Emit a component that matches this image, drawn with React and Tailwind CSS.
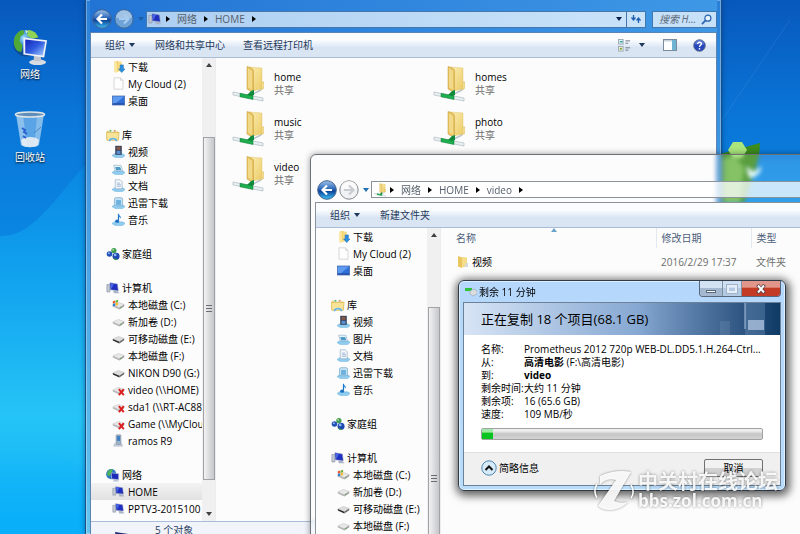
import React from "react";

/* ---------- icons ---------- */

function Glyph({ size = "size-[13px]", children }) {
  return (
    <svg viewBox="0 0 16 16" className={`${size} shrink-0`} aria-hidden="true">
      {children}
    </svg>
  );
}

const DownloadsIcon = () => (
  <Glyph>
    <path d="M3 2l5-1v13l-5 1z" fill="#f3cf62" />
    <path d="M3 2l3 1v13l-3-1z" fill="#fbe8a4" />
    <path d="M7 2h5v12H7z" fill="#f6dc85" />
    <path d="M10 6h4v5h2l-4 4.500-4-4.500h2z" fill="#2b8fe0" stroke="#1667b0" strokeWidth=".6" />
  </Glyph>
);

const BlankFileIcon = () => (
  <Glyph>
    <path d="M2.500 1h8l3 3v11h-11z" fill="#fefefe" stroke="#c9c9c9" strokeWidth=".9" />
    <path d="M10.500 1v3h3" fill="#eee" stroke="#c9c9c9" strokeWidth=".8" />
  </Glyph>
);

const DesktopIcon = () => (
  <Glyph>
    <rect x=".5" y="2.500" width="15" height="11" fill="#2f6fd8" stroke="#4a6cae" />
    <path d="M1 3h14L4 12H1z" fill="#5d9af0" />
    <path d="M1 11.500h14V13H1z" fill="#24489c" />
  </Glyph>
);

const LibraryIcon = () => (
  <Glyph size="size-[14px]">
    <path d="M1 3h4l1 1h8v9H1z" fill="#f0cc62" />
    <path d="M3 2h9v3H3z" fill="#e9f5ef" />
    <path d="M4 2.500h2v1.500H4z" fill="#3faa48" />
    <path d="M9 2.500h2v1.500H9z" fill="#e07b3b" />
    <path d="M0 5h15l-1 9H1z" fill="#f9e396" stroke="#d8b04a" strokeWidth=".8" />
    <path d="M3 15c0-5 10-5 10 0h-2c0-2.500-6-2.500-6 0z" fill="#67b7e8" />
  </Glyph>
);

const Tray = () => (
  <path d="M0 13c3-3 5-2.500 6-2h4c2-.5 4.500 0 6 2l-3 2.500H4z" fill="#8fcdf0" stroke="#4d9fd0" strokeWidth=".5" />
);

const VideoIcon = () => (
  <Glyph>
    <Tray />
    <path d="M4 1h8v11H4z" fill="#2c3b55" />
    <path d="M5.500 2h5v4h-5z" fill="#8a5a48" />
    <path d="M5.500 7h5v4h-5z" fill="#5c8fcf" />
  </Glyph>
);

const PictureIcon = () => (
  <Glyph>
    <Tray />
    <path d="M2 4h9l2 7H4z" fill="#e9f3fa" stroke="#86a9c4" strokeWidth=".7" />
    <path d="M4 6h6l1.500 4H5z" fill="#4d9bc7" />
  </Glyph>
);

const DocumentIcon = () => (
  <Glyph>
    <Tray />
    <path d="M4 1h6l2.500 2.500V12H4z" fill="#f4f8fc" stroke="#93a8be" strokeWidth=".8" />
    <path d="M6 5h4M6 7h5M6 9h5" stroke="#7a9cc4" strokeWidth=".8" />
  </Glyph>
);

const ThunderIcon = () => (
  <Glyph>
    <Tray />
    <rect x="3" y="2" width="10" height="10" rx="2" fill="#c3e0f3" stroke="#6fa4c8" strokeWidth=".8" />
    <rect x="5" y="5" width="6" height="6" fill="#6db2df" />
  </Glyph>
);

const MusicIcon = () => (
  <Glyph>
    <Tray />
    <path d="M8 1v8" stroke="#1d6fc0" strokeWidth="1.500" />
    <ellipse cx="6.300" cy="10" rx="2.500" ry="2" fill="#1d6fc0" />
    <path d="M8 1c1 3 4 3 3 6-.6-2-2-2-3-2.500z" fill="#2b8be0" />
  </Glyph>
);

const HomegroupIcon = () => (
  <Glyph size="size-[14px]">
    <circle cx="4" cy="8" r="3.200" fill="#2452b8" />
    <circle cx="9" cy="4" r="3" fill="#3f9c4e" />
    <circle cx="11.500" cy="10.500" r="4" fill="#1f47b0" />
    <circle cx="10.500" cy="9" r="1.600" fill="#8ab8f5" />
    <circle cx="8.200" cy="3.200" r="1" fill="#b9e6a8" />
    <circle cx="3.300" cy="7" r="1" fill="#9cc4f5" />
    <path d="M7.500 12.500l3 2.500 3-1z" fill="#3f9c4e" />
  </Glyph>
);

const ComputerIcon = ({ size = "size-[14px]" }) => (
  <Glyph size={size}>
    <path d="M1 4h3.500v8.500H1z" fill="#c2c8d4" stroke="#7b8496" strokeWidth=".6" />
    <path d="M4.500 2l8.500 1.500 1 7.500-9-1z" fill="#1f2fc0" stroke="#8b95b0" strokeWidth=".6" />
    <path d="M5 2.500l4 1-3 6z" fill="#4a66e8" />
    <path d="M8 11l5 .5 2.500 2.500H9z" fill="#aab4c6" />
  </Glyph>
);

const Drive = ({ dark }) => (
  <>
    <path d="M1 8.500l7-3 7 2.500-6 4z" fill={dark ? "#ddd" : "#e8e8e8"} stroke="#b0b0b0" strokeWidth=".5" />
    <path d="M1 8.500l8 3.500v2l-8-3.500z" fill={dark ? "#2b2b2b" : "#b4b4b4"} />
    <path d="M9 12l6-4v2l-6 4z" fill={dark ? "#666" : "#9a9a9a"} />
    {!dark && <circle cx="11" cy="11.500" r=".8" fill="#45b04a" />}
  </>
);

const DriveIcon = () => (
  <Glyph>
    <Drive />
  </Glyph>
);

const RemovableIcon = () => (
  <Glyph>
    <Drive dark />
  </Glyph>
);

const SystemDriveIcon = () => (
  <Glyph>
    <Drive />
    <path d="M1 4l3-1v3L1 7z" fill="#e8582a" />
    <path d="M4.500 3l3-1v3l-3 1z" fill="#6cb33f" />
    <path d="M1 7.500l3-1v3l-3 1z" fill="#2f7fd0" />
    <path d="M4.500 6.500l3-1v3l-3 1z" fill="#f5bd2c" />
  </Glyph>
);

const LostDriveIcon = () => (
  <Glyph>
    <Drive />
    <path d="M8.500 7.500l6 7.500M14.500 7.500l-6 7.500" stroke="#dc1f1f" strokeWidth="2.400" />
  </Glyph>
);

const PhoneIcon = () => (
  <Glyph>
    <path d="M3 12l9 0 1 3H2z" fill="#cfd6df" stroke="#96a2b2" strokeWidth=".5" />
    <rect x="5" y="1" width="6" height="12" rx="1" fill="#9fb3c8" stroke="#6f8399" strokeWidth=".6" />
    <rect x="6.200" y="2.500" width="3.600" height="6" fill="#3f7fc6" />
  </Glyph>
);

const NetworkIcon = () => (
  <Glyph size="size-[14px]">
    <circle cx="6" cy="7" r="5.800" fill="#2a76c8" />
    <path d="M2 4c2-3 5-3 6-2L6 6 4 9 1 8z" fill="#4fb556" />
    <path d="M6 5.500l8.500 1v7l-8-1z" fill="#1c2cb8" stroke="#b6c2da" strokeWidth=".8" />
    <path d="M9 13.500l5 .5 1 1.500H8z" fill="#b9c2d2" />
  </Glyph>
);

const SharedFolderIcon = ({ className = "h-9 w-8" }) => (
  <svg viewBox="0 0 32 36" className={`${className} shrink-0`} aria-hidden="true">
    <defs>
      <linearGradient id="leaf" x1="0" y1="0" x2="1" y2="1">
        <stop offset="0" stopColor="#fbeeb4" />
        <stop offset="1" stopColor="#eccb66" />
      </linearGradient>
    </defs>
    <path d="M29 16h3v6l-3 2z" fill="#f7e3a0" stroke="#d9b75a" strokeWidth=".6" />
    <path d="M17 1l13 1v21l-10 2z" fill="url(#leaf)" stroke="#dcbb5c" strokeWidth=".4" />
    <path d="M15 .5c3 1 6 1.500 6.500 4V27L15 23z" fill="#e6c25e" stroke="#c49d3c" strokeWidth=".5" />
    <path d="M16 2l4 3v19l-4-2.500z" fill="#f2d98a" />
    <path d="M21 28l8-4M21 24v5" stroke="#b7c3c9" strokeWidth="1.500" />
    <path d="M1 26l30 6v3L1 29z" fill="#e9f0f2" stroke="#a4b2b8" strokeWidth=".6" />
    <path d="M19 25l3-1v5l-4 2-3-2z" fill="#128a3c" />
    <path d="M8 27.300l13 2.600v3.600L8 30.800z" fill="#1dae4e" stroke="#0e7a34" strokeWidth=".5" />
  </svg>
);

const FolderIcon = () => (
  <svg viewBox="0 0 12 14" className="h-3.5 w-3 shrink-0" aria-hidden="true">
    <path d="M5 2l5 .5v9l-5 1z" fill="#f5dc88" />
    <path d="M1 1l4 1.500V13l-4-1.500z" fill="#e9c55d" />
    <path d="M9 8h2v4H7z" fill="#d5d9dc" />
  </svg>
);

const Triangle = ({ className = "" }) => (
  <svg viewBox="0 0 6 4" className={`h-1 w-1.5 shrink-0 ${className}`} aria-hidden="true">
    <path d="M0 0h6L3 4z" fill="currentColor" />
  </svg>
);

const Chevron = () => (
  <svg viewBox="0 0 4 6" className="h-1.5 w-1 shrink-0 text-black" aria-hidden="true">
    <path d="M0 0l4 3-4 3z" fill="currentColor" />
  </svg>
);

const GlobeMonitorIcon = () => (
  <svg viewBox="0 0 38 40" className="h-[38px] w-9" aria-hidden="true">
    <defs>
      <radialGradient id="globe" cx=".4" cy=".3">
        <stop offset="0" stopColor="#9fe0ff" />
        <stop offset=".6" stopColor="#2b7fd0" />
        <stop offset="1" stopColor="#0c4a9c" />
      </radialGradient>
      <linearGradient id="screen" x1="0" y1="0" x2="1" y2="1">
        <stop offset="0" stopColor="#1524b8" />
        <stop offset=".5" stopColor="#2f5be0" />
        <stop offset="1" stopColor="#a8d0ff" />
      </linearGradient>
    </defs>
    <circle cx="15" cy="16" r="14" fill="url(#globe)" />
    <path d="M3 9c3-5 6-7 9-7l1 4-4 3-1 5 3 4-1 7C4 26 0 18 3 9z" fill="#4faa38" />
    <path d="M17 2c6 0 9 4 11 8l-7 1-5-3z" fill="#8fd455" />
    <path d="M14 2l3 1-2 3z" fill="#d9f5c4" />
    <ellipse cx="27" cy="36" rx="9" ry="3" fill="#d9dde3" />
    <path d="M23 28h7l1 7h-8z" fill="#c3c8d0" />
    <path d="M12 10l25 3-3 18-22-3z" fill="#eef1f5" />
    <path d="M14 12l21 2.500-2.500 14.500-18.500-2.500z" fill="url(#screen)" />
  </svg>
);

const RecycleBinIcon = () => (
  <svg viewBox="0 0 32 38" className="h-[38px] w-8" aria-hidden="true">
    <path d="M2 3l5 31c4 3 14 3 18 0l5-31z" fill="#a9d2f2" fillOpacity=".5" />
    <path d="M2 3l5 31c2 1.500 4 2 6 2L9 4z" fill="#fff" fillOpacity=".3" />
    <path d="M23 5l-3 31c2 0 4-1 5-2l5-31z" fill="#fff" fillOpacity=".25" />
    <path d="M7 29c5-4 14-4 18 0l-1 5c-4 3-12 3-16 0z" fill="#e9eff5" fillOpacity=".9" />
    <path d="M8 17l3 2-1 2 3 2M9 25l3 2" fill="none" stroke="#2a5ed0" strokeWidth="2" />
    <path d="M20 22l7-6" stroke="#3f78b8" strokeWidth=".8" />
    <ellipse cx="16" cy="3.500" rx="14.500" ry="2.500" fill="#5f8fb8" stroke="#dfe4e8" strokeWidth="1.500" />
  </svg>
);

/* ---------- shared window parts ---------- */

function NavButtons({ muted }) {
  return (
    <div className="flex items-center gap-0.5">
      <button aria-label="后退" className="size-5 rounded-full">
        <svg viewBox="0 0 20 20" className="size-5">
          <defs>
            <linearGradient id={muted ? "backA" : "backB"} x1="0" y1="0" x2="0" y2="1">
              <stop offset="0" stopColor="#9fc3ea" />
              <stop offset=".5" stopColor="#1d5cb4" />
              <stop offset=".55" stopColor="#0c3f95" />
              <stop offset="1" stopColor="#3fc2f5" />
            </linearGradient>
          </defs>
          <circle cx="10" cy="10" r="9.300" fill={muted ? "url(#backA)" : "url(#backB)"} stroke="#44618f" strokeWidth="1" />
          <path d="M15 10H6M10 5.500L5.500 10l4.500 4.500" fill="none" stroke="#fff" strokeWidth="2.200" />
        </svg>
      </button>
      <button aria-label="前进" className="size-5 rounded-full">
        <svg viewBox="0 0 20 20" className="size-5">
          <circle cx="10" cy="10" r="9.200" fill={muted ? "#f1f2f4" : "#6fa3d8"} stroke={muted ? "#85888d" : "#3c6494"} strokeWidth="1" />
          <path d="M2 9a8 8 0 0116 0z" fill="#fff" fillOpacity={muted ? ".7" : ".35"} />
          <path d="M5 10h9M10 5.500l4.500 4.500-4.500 4.500" fill="none" stroke={muted ? "#c9ccd1" : "#a6cbee"} strokeWidth="2.200" />
        </svg>
      </button>
      <button aria-label="最近的位置" className={muted ? "ml-0.5 text-[#1f6fb5]" : "ml-0.5 text-[#1d5fa6]"}>
        <Triangle />
      </button>
    </div>
  );
}

function Crumbs({ items }) {
  return (
    <div className="flex items-center gap-[7px]">
      {items.map((item) => (
        <React.Fragment key={item}>
          <Chevron />
          <button className="text-[#55606c]">{item}</button>
        </React.Fragment>
      ))}
      <Chevron />
    </div>
  );
}

const TREE = [
  { label: "下载", icon: DownloadsIcon },
  { label: "My Cloud (2)", icon: BlankFileIcon },
  { label: "桌面", icon: DesktopIcon },
  null,
  { label: "库", icon: LibraryIcon, root: true },
  { label: "视频", icon: VideoIcon },
  { label: "图片", icon: PictureIcon },
  { label: "文档", icon: DocumentIcon },
  { label: "迅雷下载", icon: ThunderIcon },
  { label: "音乐", icon: MusicIcon },
  null,
  { label: "家庭组", icon: HomegroupIcon, root: true },
  null,
  { label: "计算机", icon: ComputerIcon, root: true },
  { label: "本地磁盘 (C:)", icon: SystemDriveIcon },
  { label: "新加卷 (D:)", icon: DriveIcon },
  { label: "可移动磁盘 (E:)", icon: RemovableIcon },
  { label: "本地磁盘 (F:)", icon: DriveIcon },
  { label: "NIKON D90 (G:)", icon: RemovableIcon },
  { label: "video (\\\\HOME)", icon: LostDriveIcon },
  { label: "sda1 (\\\\RT-AC88", icon: LostDriveIcon },
  { label: "Game (\\\\MyClou", icon: LostDriveIcon },
  { label: "ramos R9", icon: PhoneIcon },
  null,
  { label: "网络", icon: NetworkIcon, root: true },
  { label: "HOME", icon: ComputerIcon, selected: true },
  { label: "PPTV3-2015100", icon: ComputerIcon },
];

function NavTree() {
  return (
    <nav className="flex w-[125px] shrink-0 overflow-hidden border-r border-[#ececf0]">
      <ul className="w-[111px] shrink-0 overflow-hidden">
        {TREE.map((node, i) =>
          node ? (
            <li key={i}>
              <a
                href="#"
                className={`flex h-[17px] items-center whitespace-nowrap text-black ${
                  node.root ? "gap-0.5 pl-[15px]" : "gap-[3px] pl-[21px]"
                } ${node.selected ? "bg-linear-to-b from-[#f3f3f3] to-[#e2e2e2]" : ""}`}
              >
                <node.icon size={node.root ? "size-[14px]" : "size-[13px]"} />
                {node.label}
              </a>
            </li>
          ) : (
            <li key={i} className="h-[17px]" />
          )
        )}
      </ul>
      <div className="flex flex-1 flex-col items-center bg-[#f0f0f1] pt-[5px]" aria-hidden="true">
        <Triangle className="rotate-180 text-[#404040]" />
        <div className="mt-[70px] flex h-[343px] w-3 shrink-0 flex-col items-center justify-center gap-0.5 border border-[#a2a2a6] bg-linear-to-r from-[#f2f2f3] to-[#c6c7ca]">
          <span className="h-px w-1.5 bg-[#6c6c70]" />
          <span className="h-px w-1.5 bg-[#6c6c70]" />
          <span className="h-px w-1.5 bg-[#6c6c70]" />
        </div>
        <Triangle className="mt-8 text-[#404040]" />
      </div>
    </nav>
  );
}

function CommandBar({ children }) {
  return (
    <div className="flex h-[25px] shrink-0 items-center border-b border-[#a9bdd8] bg-linear-to-b from-[#fafcfe] from-30% to-[#dae5f4] to-60% pr-2.5 pl-3.5 text-[#1e395b]">
      {children}
    </div>
  );
}

/* ---------- windows ---------- */

const SHARES = ["home", "homes", "music", "photo", "video"];

function HomeWindow() {
  return (
    <section className="absolute top-0 bottom-0 left-[85px] flex w-[637px] flex-col border-x border-[#1a4f86] bg-linear-to-b from-[#2a80d8] via-[#4da5e6] to-[#64c5ee] px-1 shadow-[0_0_5px_#00306090] ring-1 ring-white/30 ring-inset">
      <header className="flex h-8 shrink-0 items-center gap-0.5 bg-linear-to-r from-[#2274d4] to-[#3f98e6] pt-1.5 pl-0.5">
        <NavButtons />
        <div className="mr-1 flex h-[17px] min-w-0 flex-1 border border-[#4478ac] bg-linear-to-r from-[#adcff2] to-[#c9e3f9]">
          <div className="flex min-w-0 flex-1 items-center gap-1 pl-px">
            <ComputerIcon />
            <Crumbs items={["网络", "HOME"]} />
          </div>
          <button aria-label="以前的位置" className="px-1 text-[#0a1e50]">
            <Triangle />
          </button>
          <button aria-label="刷新" className="flex w-[19px] items-center justify-center border-l border-[#4478ac]">
            <svg viewBox="0 0 12 12" className="size-3">
              <path d="M3.500 2v5M1.500 4.500L3.500 7l2-2.500M8.500 10V5M6.500 7.500l2-2.500 2 2.500" fill="none" stroke="#1f5fb0" strokeWidth="1.300" />
            </svg>
          </button>
        </div>
        <label className="flex h-[17px] w-[65px] items-center border border-[#4478ac] bg-[#c6e1f8]">
          <input
            aria-label="搜索 HOME"
            placeholder="搜索 H..."
            className="w-12 bg-transparent pl-1.5 italic outline-none placeholder:text-[#5d6b7a]"
          />
          <svg viewBox="0 0 12 12" className="size-[11px]" aria-hidden="true">
            <circle cx="7.500" cy="4.500" r="3.300" fill="#e8f4ff" stroke="#2b65ae" strokeWidth="1.300" />
            <path d="M5 7L1 11" stroke="#2b65ae" strokeWidth="1.800" />
          </svg>
        </label>
      </header>

      <div className="flex min-h-0 flex-1 flex-col border-x border-t border-[#5b86b4] bg-[#fcfcfc]">
        <CommandBar>
          <button className="flex items-center gap-1">
            组织 <Triangle />
          </button>
          <button className="ml-5">网络和共享中心</button>
          <button className="ml-[18px]">查看远程打印机</button>
          <div className="ml-auto flex items-center">
            <button aria-label="更改视图" className="flex items-center gap-2">
              <svg viewBox="0 0 14 14" className="size-[13px]">
                <rect x=".5" y=".5" width="5" height="5" fill="#e4f1f4" stroke="#9aa9b5" />
                <rect x=".5" y="8" width="5" height="5" fill="#eef2d8" stroke="#9aa9b5" />
                <path d="M2 3h3" stroke="#2aa39a" strokeWidth="1.500" />
                <path d="M2 10.500h2" stroke="#7a9c2a" strokeWidth="2" />
                <path d="M8 2h5M8 4.500h3M8 9.500h5M8 12h3" stroke="#66717e" />
              </svg>
              <Triangle />
            </button>
            <button aria-label="显示预览窗格" className="ml-[18px]">
              <svg viewBox="0 0 14 12" className="h-3 w-3.5">
                <rect x=".5" y=".5" width="13" height="11" fill="#fff" stroke="#7b8b9c" />
                <path d="M9 1h4v10H9z" fill="#6fb5d3" />
                <path d="M1 1h8v1.500H1z" fill="#c9d3dc" />
              </svg>
            </button>
            <button aria-label="帮助" className="ml-4">
              <svg viewBox="0 0 14 14" className="size-[13px]">
                <circle cx="7" cy="7" r="6.300" fill="#2446b8" stroke="#6d7890" />
                <path d="M2 6a5 5 0 0110 0z" fill="#6f8ae0" fillOpacity=".7" />
                <path d="M5 5.500C5 2.800 9.300 3 9 5.500 8.800 6.800 7 6.800 7 8.600M7 9.700v1.500" fill="none" stroke="#fff" strokeWidth="1.500" />
              </svg>
            </button>
          </div>
        </CommandBar>

        <div className="flex min-h-0 flex-1 overflow-hidden">
          <NavTree />
          <ul className="grid flex-1 auto-rows-[45px] grid-cols-[201px_1fr] content-start pt-2 pl-4">
            {SHARES.map((name) => (
              <li key={name} className="flex gap-2.5">
                <SharedFolderIcon />
                <div className="pt-[5px] leading-[13px]">
                  <p className="text-black">{name}</p>
                  <p className="text-[#6d6d6d]">共享</p>
                </div>
              </li>
            ))}
          </ul>
        </div>

        <footer className="flex h-[13px] shrink-0 gap-5 overflow-hidden border-t border-[#a9bdd8] bg-[#f1f5fb] pl-6 text-[#1e395b]">
          <svg viewBox="0 0 20 12" className="mt-2 h-3 w-5" aria-hidden="true">
            <path d="M0 2l20 3v7H2z" fill="#1c2a6e" />
          </svg>
          <span className="pt-0.5 leading-3">5 个对象</span>
        </footer>
      </div>
    </section>
  );
}

function VideoWindow() {
  return (
    <section className="absolute top-[154px] right-[-60px] bottom-[-20px] left-[310px] flex flex-col rounded-tl-md border border-[#6c7176] bg-white/15 pl-1 shadow-[0_0_6px_#00000066] backdrop-blur-[2px]">
      <header className="flex h-[47px] shrink-0 items-end gap-0.5 pb-0.5 pl-0.5">
        <NavButtons muted />
        <div className="mb-0.5 flex h-[17px] min-w-0 flex-1 items-center gap-1 border border-[#8c9299] bg-white/75 pl-0.5">
          <SharedFolderIcon className="h-3.5 w-3" />
          <Crumbs items={["网络", "HOME", "video"]} />
        </div>
      </header>

      <div className="flex min-h-0 flex-1 flex-col border-t border-l border-[#8c9299] bg-[#fcfcfc]">
        <CommandBar>
          <button className="flex items-center gap-1">
            组织 <Triangle />
          </button>
          <button className="ml-5">新建文件夹</button>
        </CommandBar>
        <div className="flex min-h-0 flex-1 overflow-hidden">
          <NavTree />
          <div className="min-w-0 flex-1">
            <table className="w-full table-fixed text-left">
              <colgroup>
                <col className="w-[215px]" />
                <col className="w-[95px]" />
                <col />
              </colgroup>
              <thead>
                <tr className="h-5 text-[#4c607a]">
                  <th className="relative border-r border-[#e3e8ee] pl-[15px] font-normal">
                    名称
                    <svg viewBox="0 0 6 4" className="absolute top-0 left-[110px] h-1 w-1.5" aria-hidden="true">
                      <path d="M0 4h6L3 0z" fill="#6aa3c9" />
                    </svg>
                  </th>
                  <th className="border-r border-[#e3e8ee] pl-[5px] font-normal">修改日期</th>
                  <th className="pl-[5px] font-normal">类型</th>
                </tr>
              </thead>
              <tbody>
                <tr className="h-7 text-[#6d6d6d]">
                  <td className="pl-4">
                    <span className="flex items-center gap-[3px] text-black">
                      <FolderIcon />
                      视频
                    </span>
                  </td>
                  <td className="pl-[5px] whitespace-nowrap">2016/2/29 17:37</td>
                  <td className="pl-[5px]">文件夹</td>
                </tr>
              </tbody>
            </table>
          </div>
        </div>
      </div>
    </section>
  );
}

const DETAILS = [
  ["名称:", "Prometheus 2012 720p WEB-DL.DD5.1.H.264-Ctrl..."],
  ["从:", <><b>高清电影</b> (F:\高清电影)</>],
  ["到:", <b>video</b>],
  ["剩余时间:", "大约 11 分钟"],
  ["剩余项:", "16 (65.6 GB)"],
  ["速度:", "109 MB/秒"],
];

function CopyDialog() {
  return (
    <section
      role="dialog"
      aria-labelledby="copy-title"
      className="absolute top-[280px] left-[458px] flex w-[328px] flex-col rounded-md border border-[#2f3b48] bg-linear-to-b from-[#b5d7fb] to-[#b8dcfa] px-1 pb-1 shadow-[1px_2px_9px_3px_#00000099] ring-1 ring-white/60 ring-inset"
    >
      <header className="flex h-[21px] items-start gap-0.5 pl-0.5">
        <svg viewBox="0 0 12 10" className="mt-1.5 h-2.5 w-3" aria-hidden="true">
          <path d="M0 1h7v3H0z" fill="#2fc23c" />
          <path d="M5 4l4-2 3 2v3L8 9 5 7z" fill="#d9dde0" stroke="#9aa1a8" strokeWidth=".6" />
        </svg>
        <h1 id="copy-title" className="pt-1 leading-[14px] text-black">
          剩余 11 分钟
        </h1>
        <div className="ml-auto flex h-4 overflow-hidden rounded-b border border-t-0 border-[#55687e]">
          <button aria-label="最小化" className="flex w-[22px] items-end justify-center bg-linear-to-b from-[#d3e2f2] from-50% to-[#a4b9d0] to-50% pb-[3px]">
            <span className="h-[3px] w-2.5 border border-[#5a6b80] bg-white" />
          </button>
          <button
            aria-label="最大化"
            disabled
            className="flex w-5 items-center justify-center border-x border-[#7c90a6] bg-linear-to-b from-[#cfe0f2] from-50% to-[#b4cae2] to-50%"
          >
            <span className="h-2 w-2.5 border-2 border-[#e6eff8] outline outline-[#9fb4ca]" />
          </button>
          <button aria-label="关闭" className="flex w-[38px] items-center justify-center bg-linear-to-b from-[#e2958a] from-40% to-[#c33a25] to-50%">
            <svg viewBox="0 0 10 10" className="size-2.5">
              <path d="M1.500 1l7 8M8.500 1l-7 8" stroke="#4a3a44" strokeWidth="3.400" />
              <path d="M2 1.500l6 7M8 1.500l-6 7" stroke="#fff" strokeWidth="2" />
            </svg>
          </button>
        </div>
      </header>

      <div className="border border-[#6d8299] bg-white">
        <div className="relative flex h-8 items-center overflow-hidden bg-linear-to-r from-[#d7e4f5] via-[#86a8d2] via-55% to-[#0e3a66] pl-[17px]">
          <h2 className="text-[13px] text-black">正在复制 18 个项目(68.1 GB)</h2>
          <svg viewBox="0 0 60 32" className="absolute top-0 right-0 h-8 w-[60px]" aria-hidden="true">
            <path d="M25 0h20v32H25z" fill="#7fa6cc" fillOpacity=".3" />
            <path d="M25 0v26" stroke="#c9dcf0" strokeOpacity=".8" />
            <rect x="28" y="17" width="16" height="10" fill="#b3c6e0" fillOpacity=".75" />
            <rect x="0" y="18" width="10" height="14" fill="#a9c3df" fillOpacity=".15" />
          </svg>
        </div>

        <dl className="grid grid-cols-[43px_1fr] gap-y-px pt-2 pl-[17px] leading-3 whitespace-nowrap text-black">
          {DETAILS.map(([term, value]) => (
            <React.Fragment key={term}>
              <dt>{term}</dt>
              <dd>{value}</dd>
            </React.Fragment>
          ))}
        </dl>

        <div
          role="progressbar"
          aria-label="复制进度"
          aria-valuenow={4}
          aria-valuemin={0}
          aria-valuemax={100}
          className="mx-[17px] mt-2 mb-3 h-3 rounded-xs border border-[#a3a3a3] bg-linear-to-b from-[#eeeeee] from-20% via-[#c6c6c6] via-50% to-[#d3d3d3]"
        >
          <div className="h-full w-[4%] bg-linear-to-b from-[#9fe9a6] from-30% to-[#08c421] to-40%" />
        </div>

        <footer className="flex h-[33px] items-center justify-between border-t border-[#dfdfdf] bg-[#f0f0f0] px-[17px] pb-0.5">
          <button className="flex items-center gap-0.5 text-black">
            <svg viewBox="0 0 16 16" className="size-4" aria-hidden="true">
              <circle cx="8" cy="8" r="7.200" fill="#d6eaf8" stroke="#4f86ae" strokeWidth="1" />
              <path d="M4.500 10L8 6.500l3.500 3.500" fill="none" stroke="#111" strokeWidth="2" />
            </svg>
            简略信息
          </button>
          <button className="h-[18px] w-[59px] rounded-xs border border-[#707070] bg-linear-to-b from-[#f2f2f2] from-50% to-[#d2d2d2] to-50% leading-4 text-black">
            取消
          </button>
        </footer>
      </div>
    </section>
  );
}

/* ---------- desktop ---------- */

function Wallpaper() {
  return (
    <svg
      viewBox="0 0 800 534"
      preserveAspectRatio="none"
      className="absolute inset-0 h-full w-full"
      aria-hidden="true"
    >
      <defs>
        <linearGradient id="sky" x1="0" y1="0" x2="0" y2="1">
          <stop offset="0" stopColor="#0a5cc4" />
          <stop offset=".3" stopColor="#0a86e2" />
          <stop offset=".5" stopColor="#10a0ee" />
          <stop offset=".78" stopColor="#25c4f6" />
          <stop offset="1" stopColor="#0cacf8" />
        </linearGradient>
        <linearGradient id="shade" x1="0" y1="0" x2="0" y2="1">
          <stop offset="0" stopColor="#0858bc" />
          <stop offset=".5" stopColor="#0a76d8" />
          <stop offset="1" stopColor="#0a86e2" />
        </linearGradient>
        <linearGradient id="pool" x1="0" y1="0" x2="0" y2="1">
          <stop offset="0" stopColor="#06b0fb" stopOpacity="0" />
          <stop offset="1" stopColor="#06b0fb" stopOpacity=".7" />
        </linearGradient>
      </defs>
      <path d="M0 0h800v534H0z" fill="url(#sky)" />
      <path d="M0 0h800v160H90C60 190 35 238 0 236z" fill="url(#shade)" />
      <path d="M722 120L790 20" stroke="#fff" strokeOpacity=".08" />
      <path d="M0 450c30-5 60 0 86 20v64H0z" fill="url(#pool)" />
      <path d="M720 154l40-11c0 20-10 40-16 60h-24z" fill="#3c8c1e" />
      <path d="M722 160c8-6 20 0 22 10l-4 33h-18z" fill="#6fb84a" />
      <path d="M733 142h9l5 8-5 8h-9l-5-8z" fill="#a9e67c" />
      <path d="M746 166l8 6 7-6c0 7-4 11-12 12z" fill="#e4fbff" />
    </svg>
  );
}

function Shortcut({ icon: Icon, label }) {
  return (
    <button className="flex w-[60px] flex-col items-center gap-px text-white [text-shadow:0_1px_2px_#000]">
      <Icon />
      {label}
    </button>
  );
}

function Watermark() {
  return (
    <div className="pointer-events-none absolute top-[470px] left-[594px] flex items-center gap-1 font-bold text-white/90 [text-shadow:0_0_3px_#00000077]">
      <svg viewBox="0 0 40 42" className="h-[42px] w-10 drop-shadow-[0_0_1px_#00000077]" aria-hidden="true">
        <path d="M6 6c10-5 22-6 31-4L20 31c5 2 9 2 14 1-6 6-12 8-18 8-5 0-9-1-12-4L22 10C15 8 10 10 6 15z" fill="#fff" fillOpacity=".92" />
        <path d="M3 14c-3 5-3 9 0 14M37 15c3 5 3 9 0 13" fill="none" stroke="#fff" strokeWidth="1.500" />
      </svg>
      <div className="whitespace-nowrap">
        <p className="text-[20px] leading-5">中关村在线论坛</p>
        <p className="text-[17px] leading-[18px]">bbs.zol.com.cn</p>
      </div>
    </div>
  );
}

export default function App() {
  return (
    <main className="relative h-screen w-full overflow-hidden font-['Open_Sans','Noto_Sans_CJK_SC',sans-serif] text-[10px] leading-[14px]">
      <Wallpaper />
      <div className="relative flex w-[60px] flex-col gap-[30px] pt-7">
        <Shortcut icon={GlobeMonitorIcon} label="网络" />
        <Shortcut icon={RecycleBinIcon} label="回收站" />
      </div>
      <HomeWindow />
      <VideoWindow />
      <CopyDialog />
      <Watermark />
    </main>
  );
}
